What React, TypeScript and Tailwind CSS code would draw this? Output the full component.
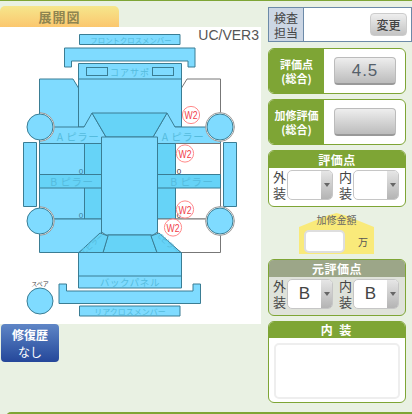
import React from "react";

const F = "#7FDBFF";
const D = "#66D3F7";
const S = "#3a7d94";
const T = "#55bbdd";

function Part(p: { d: string; fill?: string }) {
  return <path d={p.d} fill={p.fill ?? F} stroke={S} strokeWidth={1} />;
}

function Label(p: { x: number; y: number; s: number; t: string; ls?: number; tr?: string; c?: string }) {
  return (
    <text x={p.x} y={p.y} fontSize={p.s} fill={p.c ?? T} textAnchor="middle" letterSpacing={p.ls ?? 0} transform={p.tr} fontFamily="'Noto Sans CJK JP', sans-serif">
      {p.t}
    </text>
  );
}

function Wheel(p: { cx: number; cy: number; ring?: boolean; arc?: boolean }) {
  return (
    <g>
      {p.ring && <circle cx={p.cx} cy={p.cy} r={14.4} fill="#fff" stroke="#999" strokeWidth={1} />}
      {p.arc && (
        <path d={`M${p.cx} ${p.cy - 14.3}A14.3 14.3 0 0 1 ${p.cx} ${p.cy + 14.3}`} fill="#fff" stroke="#999" strokeWidth={1} />
      )}
      <circle cx={p.cx} cy={p.cy} r={13} fill={F} stroke={S} strokeWidth={1} />
    </g>
  );
}

function W2(p: { x: number; y: number }) {
  return (
    <g>
      <circle cx={p.x} cy={p.y} r={8.6} fill="#fff" fillOpacity={0.75} stroke="#ff8a8a" strokeWidth={1} />
      <text x={p.x - 6.5} y={p.y + 4} fontSize={11} fill="#f0404a" textLength={13} lengthAdjust="spacingAndGlyphs" fontFamily="'Liberation Sans', sans-serif">W2</text>
    </g>
  );
}

function Zero(p: { x: number; y: number; c: string }) {
  return <text x={p.x} y={p.y} fontSize={8} fill={p.c} textAnchor="middle" fontFamily="'Liberation Sans', sans-serif">0</text>;
}

function Diagram() {
  return (
    <svg className="block" width={261} height={297} viewBox="0 27 261 297">
      <rect x={0} y={27} width={261} height={297} fill="#fff" />
      <text x={259} y={40} fontSize={14} fill="#555" textAnchor="end" fontFamily="'Liberation Sans', sans-serif">UC/VER3</text>

      <Part d="M79.5 34.5H180V44.5H79.5Z" />
      <Label x={131} y={43} s={7.4} t="フロントクロスメンバー" />
      <Part d="M64.5 48H195V67H188V61H71.5V67H64.5Z" />

      <Part d="M39.5 79H73L78.5 88V127H84L92 113H167L175 127H181.5V143.5H39.5V127Z" />
      <path d="M181.5 88L187 79H220.5V113" fill="#fff" stroke="#777" strokeWidth={1} />
      <Part d="M78.5 63.5H181.5V127H78.5Z" />
      <path d="M78.5 79H181.5" stroke={S} strokeWidth={1} />
      <rect x={86.5} y={67.5} width={21} height={8} fill={F} stroke={S} />
      <rect x={152.5} y={67.5} width={21} height={8} fill={F} stroke={S} />
      <Label x={130} y={76} s={9} t="コアサポ" ls={1} />

      <Part d="M51 127H84L92 113L106 137L101.5 143.5H39.5V130Z" />
      <Part d="M209 127H175L167 113L153 137L157.5 143.5H220.5V130Z" />
      <Part d="M92 113H167L153 137H106Z" fill={D} />
      <Label x={78} y={140.5} s={10.5} t="A ピラー" ls={0.5} />
      <Label x={183} y={140.5} s={10.5} t="A ピラー" ls={0.5} />

      <Part d="M39.5 143.5H101.5V219H39.5Z" />
      <Part d="M84.5 143.5H101.5V219H84.5Z" fill={D} />
      <Part d="M39.5 174.5H101.5V188H39.5Z" fill={D} />
      <Label x={72} y={186} s={10.5} t="B ピラー" ls={0.5} />
      <path d="M157.5 143.5H220.5V219H157.5Z" fill="#fff" stroke="#777" />
      <Part d="M157.5 143.5H175.5V219H157.5Z" fill={D} />
      <Part d="M157.5 174.5H220.5V188H157.5Z" fill={D} />
      <Label x={192} y={186} s={10.5} t="B ピラー" ls={0.5} />

      <Zero x={81} y={174} c="#3b7f9c" />
      <Zero x={179} y={174} c="#333" />
      <Zero x={81} y={218} c="#3b7f9c" />
      <Zero x={179} y={218} c="#333" />

      <Part d="M23.5 142.5H36.5V206.5H23.5Z" />
      <Part d="M223.5 142.5H236.5V206.5H223.5Z" />

      <Part d="M39.5 219H101.5V234L79 252.5H39.5Z" />
      <path d="M157.5 219H220.5V252.5H181L157.5 234Z" fill="#fff" stroke="#777" />
      <Part d="M101.5 137H157.5V232L153 235H106L101.5 232Z" />
      <Part d="M108 235H151L157 252.5H103Z" fill={D} />
      <Part d="M79 252.5L100 233L108 236L103 252.5Z" fill={D} />
      <Part d="M181 252.5L159 233L151 236L157 252.5Z" fill={D} />
      <Label x={93} y={246} s={7} t="Cピラー" tr="rotate(-42 93 244)" />
      <Label x={168} y={246} s={7} t="Cピラー" tr="rotate(42 168 244)" />

      <Wheel cx={40} cy={127} arc />
      <Wheel cx={220} cy={127} ring />
      <Wheel cx={40} cy={221} arc />
      <Wheel cx={220} cy={221} ring />

      <Part d="M78.5 252.5H181.5V288H78.5Z" />
      <path d="M78.5 276H181.5" stroke={S} />
      <Label x={130} y={286} s={9.5} t="バックパネル" ls={0.6} />
      <Part d="M59 284H66.5V291H193V284H200.5V303.5H59Z" />
      <Part d="M79.5 306H180V316H79.5Z" />
      <Label x={130} y={315} s={8} t="リアクロスメンバー" />

      <Label x={40} y={286} s={6} t="スペア" c="#444" />
      <Wheel cx={40} cy={301} />

      <W2 x={191} y={115} />
      <W2 x={185} y={153.5} />
      <W2 x={185} y={209.5} />
      <W2 x={173} y={227.5} />
    </svg>
  );
}

function GreenButton({ children }: { children?: React.ReactNode }) {
  return (
    <div className="w-[62px] h-[28px] rounded-[4px] border border-[#bbb] border-b-2 border-b-[#999] bg-gradient-to-b from-[#eeeeee] to-[#bcbcbc] flex items-center justify-center text-[17px] text-[#55606a] tracking-[1px] font-['Liberation_Sans']">
      {children}
    </div>
  );
}

function ScoreRow({ label, sub, value }: { label: string; sub: string; value?: string }) {
  return (
    <div className="flex h-[46px] border border-[#7ea535] rounded-[6px] overflow-hidden bg-white">
      <div className="w-[55px] bg-[#7ea535] text-white font-bold text-[11px] leading-[14px] flex flex-col items-center justify-center">
        <span className="whitespace-nowrap">{label}</span>
        <span className="whitespace-nowrap">{sub}</span>
      </div>
      <div className="flex-1 flex items-center pl-[10px]">
        <GreenButton>{value}</GreenButton>
      </div>
    </div>
  );
}

function Select({ value }: { value?: string }) {
  return (
    <div className="w-[46px] h-[30px] flex rounded-[5px] border border-[#c6c6c6] overflow-hidden bg-white">
      <div className="flex-1 flex items-center justify-center text-[17px] text-[#444] font-['Liberation_Sans']">{value}</div>
      <div className="w-[11px] bg-gradient-to-b from-[#e6e6e6] to-[#b4b4b4] flex items-center justify-center">
        <div className="w-0 h-0 border-x-[3.5px] border-x-transparent border-t-[4px] border-t-[#666]" />
      </div>
    </div>
  );
}

function SelectPair({ first, value }: { first: string; value?: string }) {
  return (
    <div className="flex items-center">
      <div className="w-[14px] text-[13px] leading-[16px] text-[#444]">
        <div>{first}</div>
        <div>装</div>
      </div>
      <Select value={value} />
    </div>
  );
}

function SelectBox({ title, head, body, value }: { title: string; head: string; body: string; value?: string }) {
  return (
    <div className={`w-[138px] h-[57px] border border-[#7ea535] rounded-[6px] overflow-hidden ${body}`}>
      <div className={`h-[17px] ${head} text-white font-bold text-[12px] leading-[17px] text-center tracking-[0.5px]`}>{title}</div>
      <div className="flex pl-[4px] gap-[6px] pt-[1px]">
        <SelectPair first="外" value={value} />
        <SelectPair first="内" value={value} />
      </div>
    </div>
  );
}

export default function App() {
  return (
    <div className="relative w-[412px] h-[414px] overflow-hidden bg-[#e9f1e3] border-t border-[#7ea535] font-['Noto_Sans_CJK_JP',sans-serif] flex">
      <div className="w-[261px] shrink-0 pt-[5px]">
        <div className="w-[119px] h-[21px] rounded-t-[5px] bg-gradient-to-b from-[#f5e68c] to-[#fbc76e] text-[#8f8550] font-bold text-[13px] leading-[21px] text-center tracking-[1px]">
          展開図
        </div>
        <Diagram />
        <div className="ml-[1px] w-[58px] h-[38px] rounded-[4px] bg-gradient-to-b from-[#5f86c6] to-[#25479a] text-white text-[12px] leading-[17px] text-center pt-[2px]">
          <div className="font-bold">修復歴</div>
          <div>なし</div>
        </div>
      </div>

      <div className="ml-[7px] pt-[6px] flex flex-col">
        <div className="w-[144px] h-[35px] flex border border-[#6c8aa8] bg-white">
          <div className="w-[35px] bg-[#ccd6e4] border-r border-[#6c8aa8] text-[#444] text-[12px] leading-[15px] flex flex-col items-center justify-center">
            <span>検査</span>
            <span>担当</span>
          </div>
          <div className="flex-1 flex items-center justify-end pr-[4px]">
            <div className="w-[37px] h-[23px] rounded-[4px] border border-[#ccc] bg-gradient-to-b from-[#eeeeee] to-[#c4c4c4] text-[#444] text-[12px] font-medium flex items-center justify-center">
              変更
            </div>
          </div>
        </div>

        <div className="mt-[6px] w-[138px] flex flex-col gap-[5px]">
          <ScoreRow label="評価点" sub="(総合)" value="4.5" />
          <ScoreRow label="加修評価" sub="(総合)" />
          <SelectBox title="評価点" head="bg-[#7ea535]" body="bg-white" />
        </div>

        <div className="relative ml-[31px] mt-[6px] w-[75px] h-[41px] text-[#666] flex flex-col items-center pt-[1px]">
          <div className="absolute inset-0 bg-[#f9ea7a] [clip-path:polygon(0_34%,38%_6%,50%_0,62%_6%,100%_34%,100%_100%,0_100%)]" />
          <div className="relative text-[10px] leading-[12px] whitespace-nowrap">加修金額</div>
          <div className="relative flex items-center w-full pl-[5px] mt-[4px]">
            <div className="w-[41px] h-[23px] bg-white rounded-[5px] border-2 border-[#dedede]" />
            <div className="ml-[13px] text-[10px] text-[#555]">万</div>
          </div>
        </div>

        <div className="mt-[5px]">
          <SelectBox title="元評価点" head="bg-[#9ca688]" body="bg-[#dfe2da]" value="B" />
        </div>

        <div className="mt-[5px] w-[138px] h-[82px] border border-[#7ea535] rounded-[6px] overflow-hidden bg-white">
          <div className="h-[16px] bg-[#7ea535] text-white font-bold text-[12px] leading-[16px] text-center tracking-[2px]">内 装</div>
          <div className="mx-[5px] mt-[5px] h-[56px] rounded-[5px] border-2 border-[#eeeeee] bg-white" />
        </div>
      </div>

      <div className="absolute left-[6px] top-[411px] w-[406px] h-[6px] rounded-tl-[5px] bg-[#7ea535]" />
    </div>
  );
}
